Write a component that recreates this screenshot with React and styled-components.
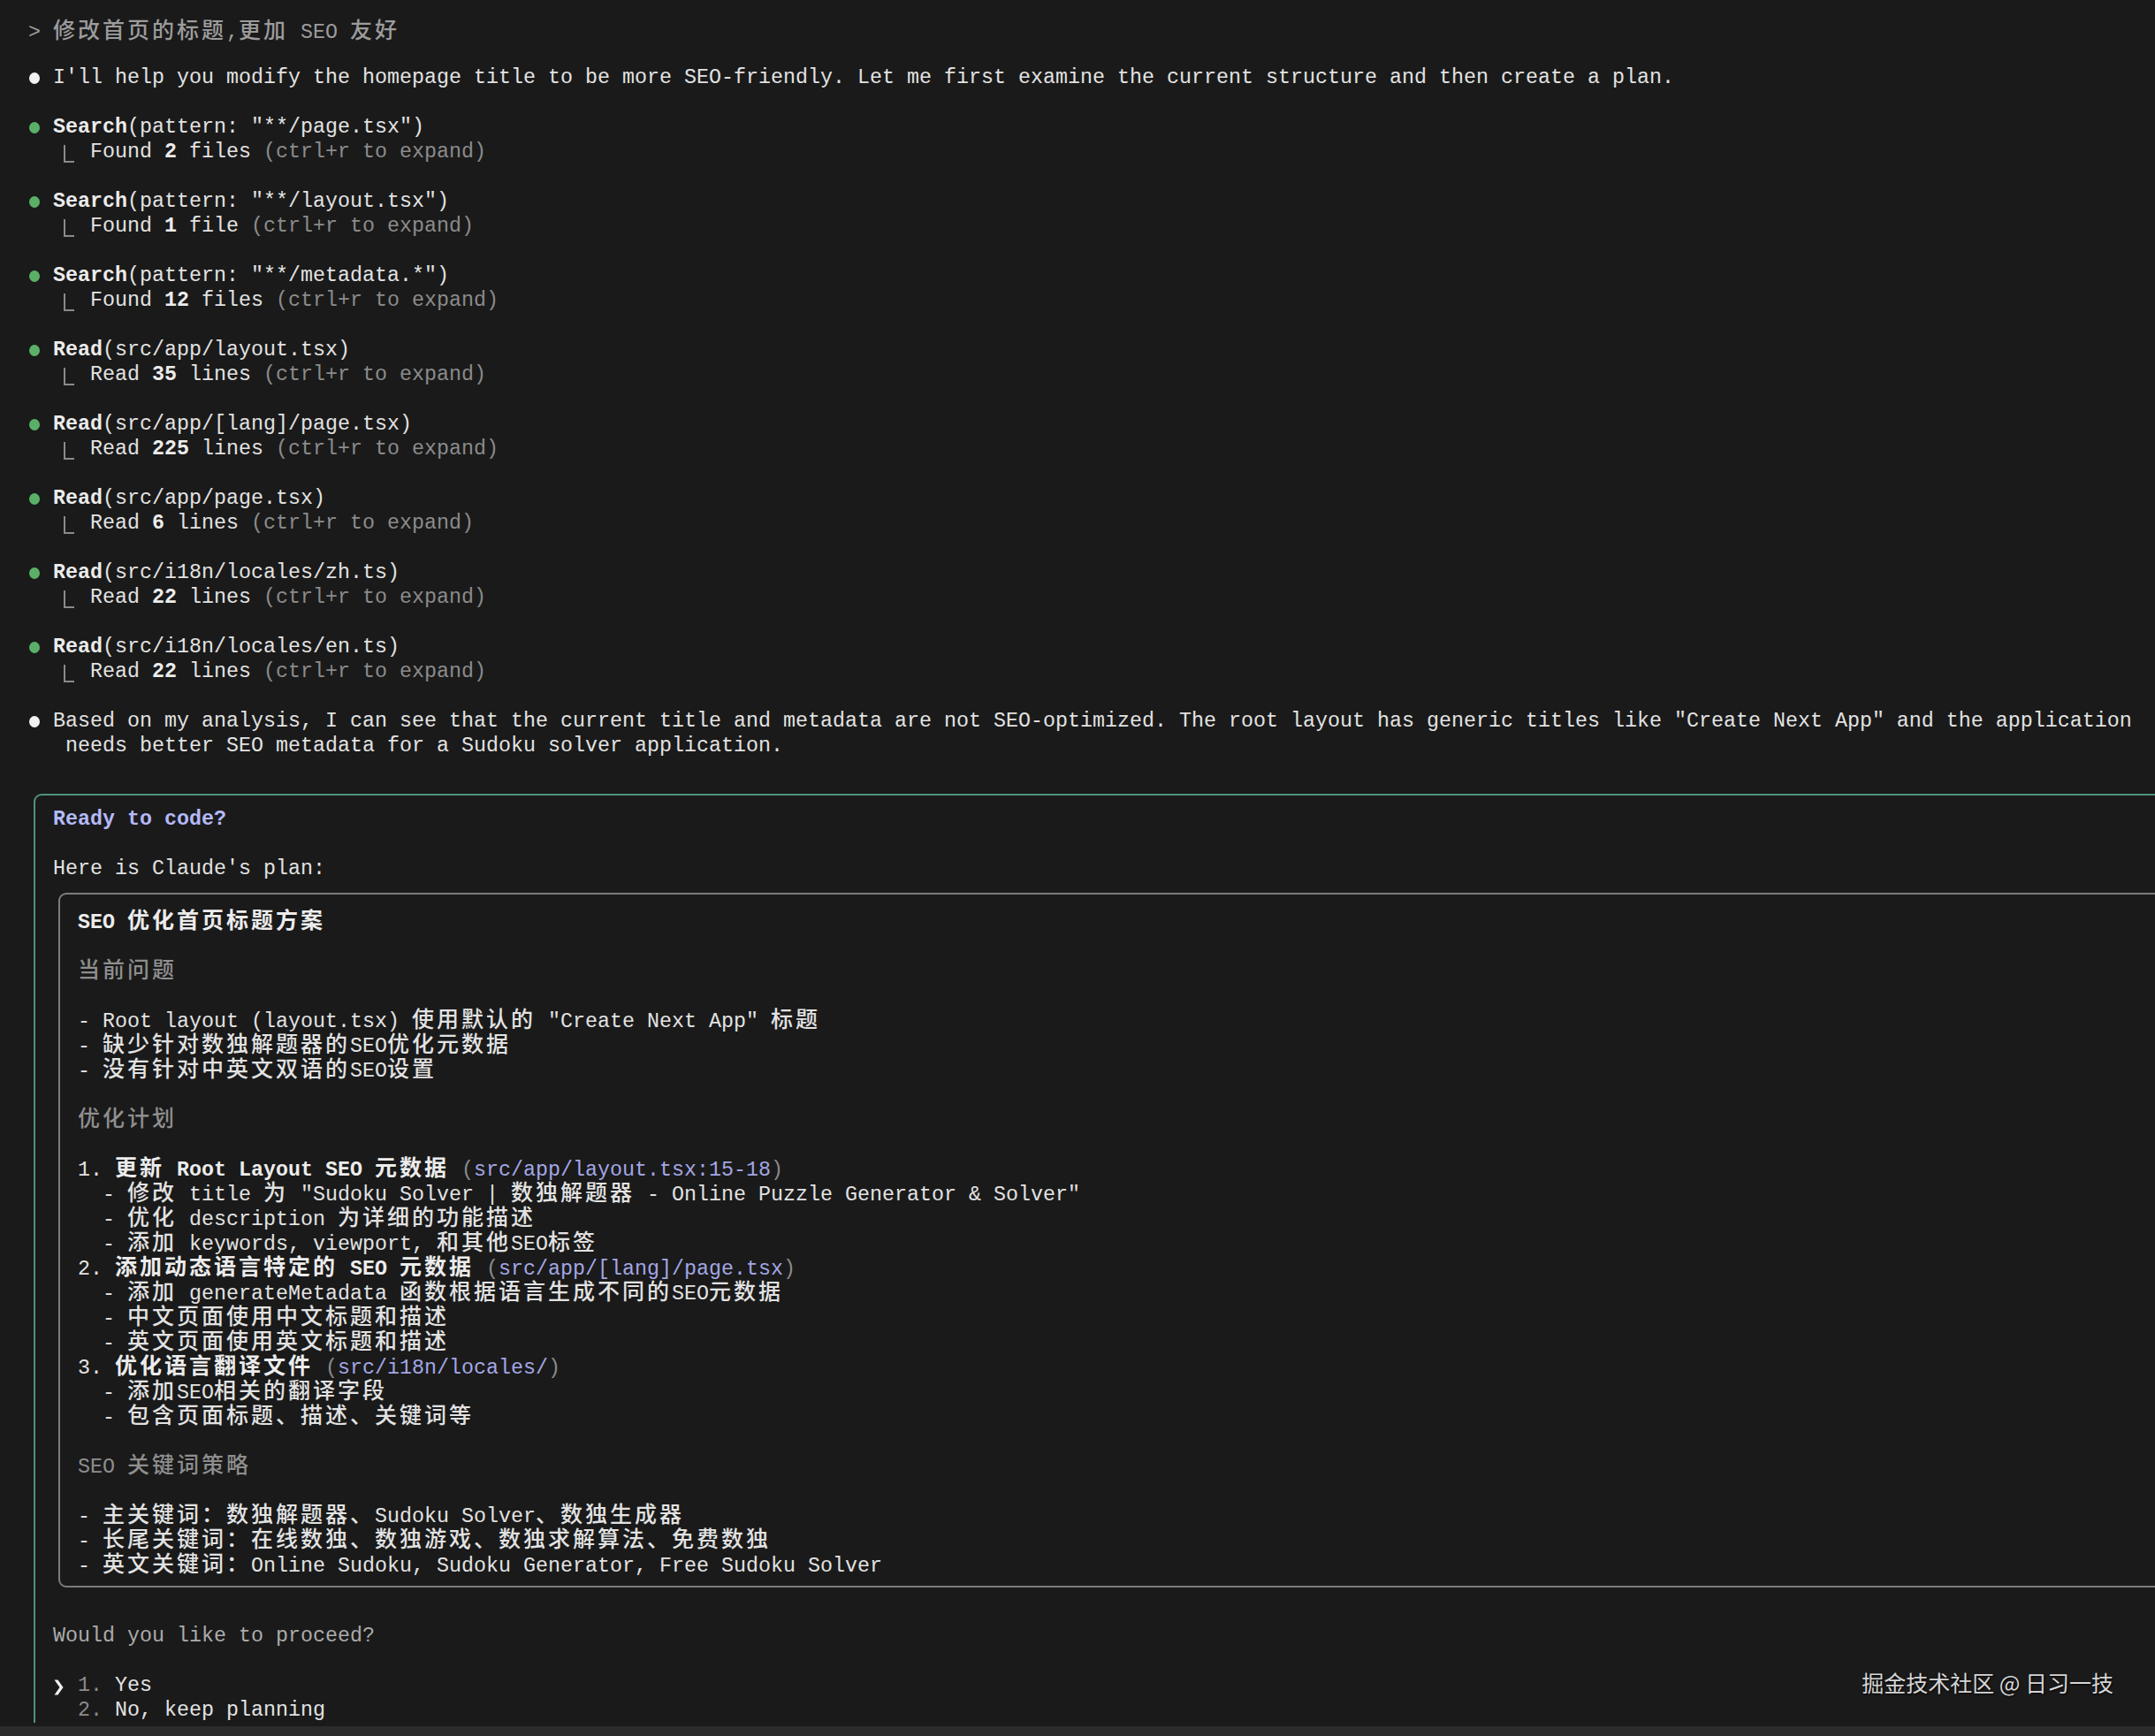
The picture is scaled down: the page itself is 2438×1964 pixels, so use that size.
import React from 'react';
import styled, { createGlobalStyle } from 'styled-components';

const COL = 14;

const GlobalStyle = createGlobalStyle`
  html, body { margin: 0; padding: 0; background: #1a1a1a; }
  body { width: 2438px; height: 1964px; overflow: hidden; }
`;

const Screen = styled.div`
  position: relative;
  width: 2438px;
  height: 1964px;
  display: flex;
  flex-direction: column;
  background: #1a1a1a;
  overflow: hidden;
`;

const Terminal = styled.div`
  flex: 1;
  min-height: 0;
  padding: 18px 0 0 32px;
  font-family: "Liberation Mono", "Noto Sans CJK SC", monospace;
  font-size: 23.33px;
  line-height: 28px;
  color: #e2e2e2;
  white-space: pre;
  overflow: hidden;
`;

const Line = styled.div`
  height: 28px;
  padding-left: ${p => (p.$indent || 0) * COL}px;
  color: ${p => p.$color || 'inherit'};
`;

const Blank = styled.div`
  height: 28px;
`;

const Strong = styled.span`
  font-weight: 700;
  color: #ececec;
`;

const Wide = styled.span`
  font-family: "Noto Sans CJK SC", sans-serif;
  font-size: 25px;
  font-weight: 500;
  letter-spacing: 3px;
  ${Strong} & {
    font-weight: 700;
  }
`;

const Dim = styled.span`
  color: #8b8b8b;
  font-weight: 400;
`;

const Path = styled.span`
  color: #a3a7e4;
  font-weight: 400;
`;

const Accent = styled.span`
  font-weight: 700;
  color: #b4b9f6;
`;

const Dot = styled.span`
  display: inline-block;
  position: relative;
  width: ${COL}px;
  height: 28px;
  vertical-align: top;
  &::before {
    content: "";
    position: absolute;
    left: 1px;
    top: 7.5px;
    width: 12px;
    height: 13px;
    border-radius: 50%;
    background: ${p => (p.$green ? '#5bb068' : '#f2f2f2')};
  }
`;

const Elbow = styled.span`
  display: inline-block;
  position: relative;
  width: ${COL}px;
  height: 28px;
  vertical-align: top;
  &::before {
    content: "";
    position: absolute;
    left: -2px;
    top: 6px;
    width: 10px;
    height: 18px;
    border-left: 2px solid #8a8a8a;
    border-bottom: 2px solid #8a8a8a;
  }
`;

const ChevronBox = styled.svg`
  display: inline-block;
  width: ${COL}px;
  height: 28px;
  vertical-align: top;
`;

const Chevron = () => (
  <ChevronBox viewBox="0 0 14 28">
    <polygon points="1.5,7.5 5.5,7.5 11.5,16 5.5,24.5 1.5,24.5 7.5,16" fill="#efefef" />
  </ChevronBox>
);

const PlanFrame = styled.div`
  margin: 40px -80px 0 6px;
  border: 2px solid #4f917f;
  border-bottom: none;
  border-radius: 9px 9px 0 0;
  padding: 13px 0 0 20px;
`;

const PlanCard = styled.div`
  margin: 13px -80px 13px 6px;
  border: 2px solid #7c7c7c;
  border-radius: 9px;
  padding: 13px 0 13px 20px;
`;

const BottomBand = styled.div`
  height: 11px;
  background: #2b2b2b;
`;

const Watermark = styled.div`
  position: absolute;
  right: 47px;
  top: 1888px;
  font-family: "Noto Sans CJK SC", sans-serif;
  font-size: 25px;
  line-height: 30px;
  color: #d6d6d6;
  text-shadow: 1px 1px 2px rgba(0, 0, 0, 0.9);
  white-space: pre;
`;

const WIDE_RE = /([\u2e80-\u303f\u3400-\u9fff\uff01-\uff60\uffe0-\uffe6]+)/;

function tx(str) {
  return str.split(WIDE_RE).map((part, i) =>
    i % 2 === 1 ? <Wide key={i}>{part}</Wide> : part
  );
}

const ToolCall = ({ name, args, children }) => (
  <>
    <Line>
      <Dot $green /> <Strong>{name}</Strong>{args}
    </Line>
    <Line $indent={3}>
      <Elbow /> {children} <Dim>(ctrl+r to expand)</Dim>
    </Line>
    <Blank />
  </>
);

export default function App() {
  return (
    <Screen>
      <GlobalStyle />
      <Terminal>
        <Line $color="#9c9c9c">{'> '}{tx('修改首页的标题,更加 SEO 友好')}</Line>
        <Blank />
        <Line>
          <Dot /> I'll help you modify the homepage title to be more SEO-friendly. Let me first examine the current structure and then create a plan.
        </Line>
        <Blank />
        <ToolCall name="Search" args={'(pattern: "**/page.tsx")'}>
          Found <Strong>2</Strong> files
        </ToolCall>
        <ToolCall name="Search" args={'(pattern: "**/layout.tsx")'}>
          Found <Strong>1</Strong> file
        </ToolCall>
        <ToolCall name="Search" args={'(pattern: "**/metadata.*")'}>
          Found <Strong>12</Strong> files
        </ToolCall>
        <ToolCall name="Read" args="(src/app/layout.tsx)">
          Read <Strong>35</Strong> lines
        </ToolCall>
        <ToolCall name="Read" args="(src/app/[lang]/page.tsx)">
          Read <Strong>225</Strong> lines
        </ToolCall>
        <ToolCall name="Read" args="(src/app/page.tsx)">
          Read <Strong>6</Strong> lines
        </ToolCall>
        <ToolCall name="Read" args="(src/i18n/locales/zh.ts)">
          Read <Strong>22</Strong> lines
        </ToolCall>
        <ToolCall name="Read" args="(src/i18n/locales/en.ts)">
          Read <Strong>22</Strong> lines
        </ToolCall>
        <Line>
          <Dot /> Based on my analysis, I can see that the current title and metadata are not SEO-optimized. The root layout has generic titles like "Create Next App" and the application
        </Line>
        <Line $indent={3}>needs better SEO metadata for a Sudoku solver application.</Line>

        <PlanFrame>
          <Line><Accent>Ready to code?</Accent></Line>
          <Blank />
          <Line>Here is Claude's plan:</Line>
          <PlanCard>
            <Line><Strong>{tx('SEO 优化首页标题方案')}</Strong></Line>
            <Blank />
            <Line $color="#8e8e8e">{tx('当前问题')}</Line>
            <Blank />
            <Line>{tx('- Root layout (layout.tsx) 使用默认的 "Create Next App" 标题')}</Line>
            <Line>{tx('- 缺少针对数独解题器的SEO优化元数据')}</Line>
            <Line>{tx('- 没有针对中英文双语的SEO设置')}</Line>
            <Blank />
            <Line $color="#8e8e8e">{tx('优化计划')}</Line>
            <Blank />
            <Line>
              1. <Strong>{tx('更新 Root Layout SEO 元数据')}</Strong> <Dim>(</Dim><Path>src/app/layout.tsx:15-18</Path><Dim>)</Dim>
            </Line>
            <Line $indent={2}>{tx('- 修改 title 为 "Sudoku Solver | 数独解题器 - Online Puzzle Generator & Solver"')}</Line>
            <Line $indent={2}>{tx('- 优化 description 为详细的功能描述')}</Line>
            <Line $indent={2}>{tx('- 添加 keywords, viewport, 和其他SEO标签')}</Line>
            <Line>
              2. <Strong>{tx('添加动态语言特定的 SEO 元数据')}</Strong> <Dim>(</Dim><Path>src/app/[lang]/page.tsx</Path><Dim>)</Dim>
            </Line>
            <Line $indent={2}>{tx('- 添加 generateMetadata 函数根据语言生成不同的SEO元数据')}</Line>
            <Line $indent={2}>{tx('- 中文页面使用中文标题和描述')}</Line>
            <Line $indent={2}>{tx('- 英文页面使用英文标题和描述')}</Line>
            <Line>
              3. <Strong>{tx('优化语言翻译文件')}</Strong> <Dim>(</Dim><Path>src/i18n/locales/</Path><Dim>)</Dim>
            </Line>
            <Line $indent={2}>{tx('- 添加SEO相关的翻译字段')}</Line>
            <Line $indent={2}>{tx('- 包含页面标题、描述、关键词等')}</Line>
            <Blank />
            <Line $color="#8e8e8e">{tx('SEO 关键词策略')}</Line>
            <Blank />
            <Line>{tx('- 主关键词：数独解题器、Sudoku Solver、数独生成器')}</Line>
            <Line>{tx('- 长尾关键词：在线数独、数独游戏、数独求解算法、免费数独')}</Line>
            <Line>{tx('- 英文关键词：Online Sudoku, Sudoku Generator, Free Sudoku Solver')}</Line>
          </PlanCard>
          <Blank />
          <Line $color="#ababab">Would you like to proceed?</Line>
          <Blank />
          <Line>
            <Chevron /> <Dim>1.</Dim> Yes
          </Line>
          <Line $indent={2}>
            <Dim>2.</Dim> No, keep planning
          </Line>
        </PlanFrame>
      </Terminal>
      <BottomBand />
      <Watermark>掘金技术社区 @ 日习一技</Watermark>
    </Screen>
  );
}
